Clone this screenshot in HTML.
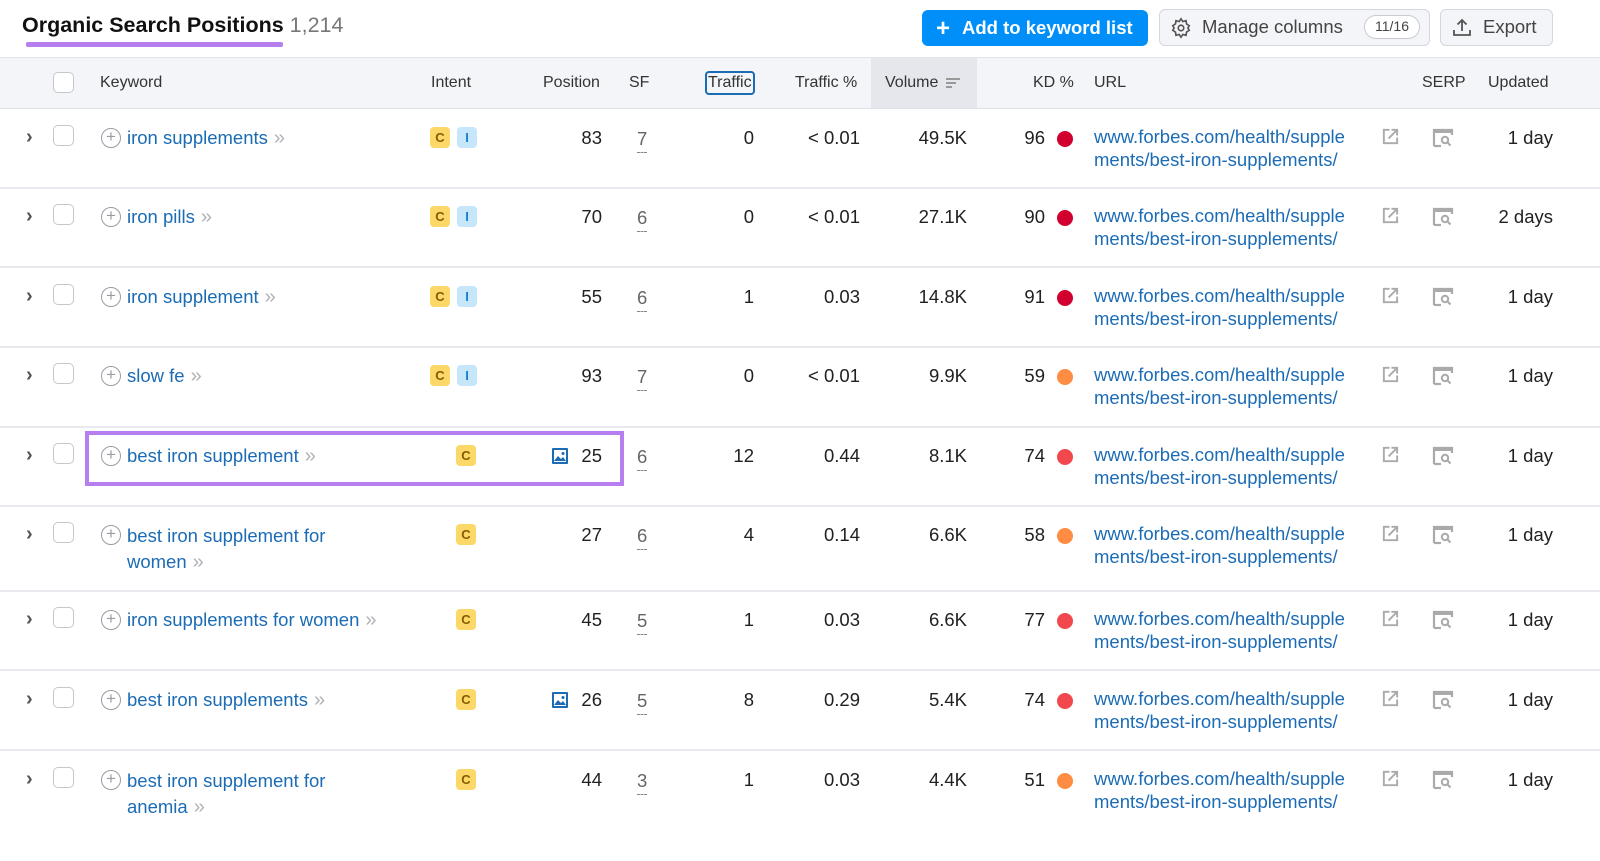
<!DOCTYPE html>
<html><head><meta charset="utf-8"><style>
*{margin:0;padding:0;box-sizing:border-box}
body{width:1600px;height:851px;overflow:hidden;background:#fff;font-family:"Liberation Sans",Arial,sans-serif;color:#212121;position:relative}
.a{position:absolute;white-space:nowrap}
.hdr{position:absolute;left:0;top:57px;width:1600px;height:52px;background:#f4f5f9;border-top:1px solid #e3e4ea;border-bottom:1px solid #dfe0e6}
.h{position:absolute;top:74px;font-size:16px;color:#333}
.row{position:absolute;left:0;width:1600px;border-bottom:2px solid #e8e9ee}
.row .a{font-size:18.5px;line-height:24px}
.chev{left:26px;top:-1px;color:#555;font-size:20px!important;font-weight:bold}
.cb{position:absolute;left:53px;top:-1px;width:21px;height:21px;border:1.5px solid #c5c7cf;border-radius:5px;background:#fff}
.plus{position:absolute;left:101px;top:2px;width:20px;height:20px;border:1.8px solid #9a9ca5;border-radius:50%;color:#9a9ca5;font-size:17px;line-height:16px;text-align:center}
.kw{left:127px;top:0;color:#1b6bb5}
.kw i{font-style:normal;color:#b0b2b8;font-size:20px;margin-left:6px}
.bC,.bI{position:absolute;top:1px;width:20px;height:21px;border-radius:4px;font-size:13px;font-weight:bold;text-align:center;line-height:21px}
.bC{background:#fcd869;color:#8a5a00}
.bI{background:#c6e6fb;color:#1a7fd1;left:457px}
.pos{right:998px;top:0}
.sf{left:637px;top:0;color:#666;border-bottom:1.5px dashed #888;line-height:26px!important}
.tr{right:846px;top:0}
.tp{right:740px;top:0}
.vol{right:633px;top:0}
.kd{right:555px;top:0}
.dot{position:absolute;left:1057px;top:5px;width:16px;height:16px;border-radius:50%}
.url{left:1094px;top:0;color:#1b6bb5;line-height:22.5px!important}
.ext{position:absolute;left:1381px;top:1px}
.serp{position:absolute;left:1432px;top:2px}
.upd{right:47px;top:0}
</style></head><body>
<div class="a" style="left:22px;top:13px;font-size:21.5px;font-weight:bold;color:#111">Organic Search Positions <span style="font-weight:normal;color:#777">1,214</span></div>
<div class="a" style="left:26px;top:42px;width:257px;height:5px;background:#b77ef0;border-radius:2px"></div>
<div class="a" style="left:922px;top:10px;width:226px;height:36px;background:#008ff8;border-radius:6px;color:#fff;font-size:18.5px;font-weight:bold;line-height:36px;padding-left:14px"><span style="font-size:24px;vertical-align:-2px;margin-right:12px">+</span>Add to keyword list</div>
<div class="a" style="left:1159px;top:9px;width:271px;height:37px;background:#f4f5f9;border:1.5px solid #d5d7de;border-radius:6px;font-size:18.5px;color:#444;line-height:34px;padding-left:42px">Manage columns
<span style="position:absolute;left:204px;top:5px;width:56px;height:24px;border:1.5px solid #c8cad1;border-radius:12px;background:#fff;font-size:14px;line-height:21px;text-align:center">11/16</span>
<svg style="position:absolute;left:10px;top:7px" width="22" height="22" viewBox="0 0 24 24" fill="none" stroke="#555" stroke-width="1.8"><circle cx="12" cy="12" r="3"/><path d="M12 2l2 3 3.5-1 .5 3.5 3 2-1.5 2.5 1.5 2.5-3 2-.5 3.5-3.5-1-2 3-2-3-3.5 1-.5-3.5-3-2L4.5 12 3 9.5l3-2L6.5 4 10 5z"/></svg></div>
<div class="a" style="left:1440px;top:9px;width:113px;height:37px;background:#f4f5f9;border:1.5px solid #d5d7de;border-radius:6px;font-size:18.5px;color:#444;line-height:34px;padding-left:42px">Export
<svg style="position:absolute;left:11px;top:7px" width="20" height="20" viewBox="0 0 20 20" fill="none" stroke="#555" stroke-width="1.8"><path d="M10 14V3M5.5 7.5L10 3l4.5 4.5M2 13v5h16v-5"/></svg></div>

<div class="hdr"><div style="position:absolute;left:871px;top:0;width:106px;height:50px;background:#e6e7ed"></div></div>
<div class="a" style="left:53px;top:72px;width:21px;height:21px;border:1.5px solid #c5c7cf;border-radius:5px;background:#fff"></div>
<div class="h a" style="left:100px">Keyword</div>
<div class="h a" style="left:431px">Intent</div>
<div class="h a" style="left:543px">Position</div>
<div class="h a" style="left:629px">SF</div>
<div class="h a" style="left:705px;top:71px;border:2px solid #1b6bb5;border-radius:4px;padding:1px 1px;line-height:18px">Traffic</div>
<div class="h a" style="left:795px">Traffic %</div>
<div class="h a" style="left:885px">Volume <span style="display:inline-block;vertical-align:middle;margin-left:3px;width:14px"><b style="display:block;height:2px;width:14px;background:#999;margin:2px 0"></b><b style="display:block;height:2px;width:10px;background:#999;margin:2px 0"></b><b style="display:block;height:2px;width:6px;background:#999;margin:2px 0"></b></span></div>
<div class="h a" style="left:1033px">KD %</div>
<div class="h a" style="left:1094px">URL</div>
<div class="h a" style="left:1422px">SERP</div>
<div class="h a" style="left:1488px">Updated</div>

<svg width="0" height="0" style="position:absolute"><defs>
<symbol id="ex" viewBox="0 0 20 20"><path d="M9 3H3v14h14v-6" fill="none" stroke="#aaa" stroke-width="2"/><path d="M8 12l9-9M11 3h6v6" fill="none" stroke="#aaa" stroke-width="2"/></symbol>
<symbol id="se" viewBox="0 0 22 20"><path d="M2 18V2h18v5" fill="none" stroke="#aaa" stroke-width="2.2"/><path d="M2 2h18v3H2z" fill="#aaa"/><circle cx="13" cy="12" r="3.2" fill="none" stroke="#aaa" stroke-width="2"/><path d="M15.5 14.5l3 3" stroke="#aaa" stroke-width="2"/><path d="M2 18h7" stroke="#aaa" stroke-width="2.2"/></symbol>
<symbol id="im" viewBox="0 0 18 18"><rect x="1" y="1" width="16" height="16" rx="1" fill="#1b6bb5"/><rect x="3" y="3" width="12" height="12" fill="#fff"/><path d="M3 14l4-5 3 3 2-2 3 4z" fill="#1b6bb5"/><circle cx="12" cy="6.5" r="1.5" fill="#1b6bb5"/></symbol>
</defs></svg>

<div class="row" style="top:108px;height:81px"><div style="position:absolute;top:18px;left:0;width:1600px">
<span class="a chev">›</span><div class="cb"></div><div class="plus">+</div><span class="a kw">iron supplements<i>»</i></span>
<div class="bC" style="left:430px">C</div><div class="bI">I</div>
<span class="a pos">83</span><span class="a sf">7</span><span class="a tr">0</span><span class="a tp">&lt; 0.01</span><span class="a vol">49.5K</span><span class="a kd">96</span><div class="dot" style="background:#d1002f"></div>
<span class="a url">www.forbes.com/health/supple<br>ments/best-iron-supplements/</span><svg class="ext" width="19" height="19"><use href="#ex"/></svg><svg class="serp" width="22" height="20"><use href="#se"/></svg><span class="a upd">1 day</span></div></div>

<div class="row" style="top:189px;height:79px"><div style="position:absolute;top:16px;left:0;width:1600px">
<span class="a chev">›</span><div class="cb"></div><div class="plus">+</div><span class="a kw">iron pills<i>»</i></span>
<div class="bC" style="left:430px">C</div><div class="bI">I</div>
<span class="a pos">70</span><span class="a sf">6</span><span class="a tr">0</span><span class="a tp">&lt; 0.01</span><span class="a vol">27.1K</span><span class="a kd">90</span><div class="dot" style="background:#d1002f"></div>
<span class="a url">www.forbes.com/health/supple<br>ments/best-iron-supplements/</span><svg class="ext" width="19" height="19"><use href="#ex"/></svg><svg class="serp" width="22" height="20"><use href="#se"/></svg><span class="a upd">2 days</span></div></div>

<div class="row" style="top:268px;height:80px"><div style="position:absolute;top:17px;left:0;width:1600px">
<span class="a chev">›</span><div class="cb"></div><div class="plus">+</div><span class="a kw">iron supplement<i>»</i></span>
<div class="bC" style="left:430px">C</div><div class="bI">I</div>
<span class="a pos">55</span><span class="a sf">6</span><span class="a tr">1</span><span class="a tp">0.03</span><span class="a vol">14.8K</span><span class="a kd">91</span><div class="dot" style="background:#d1002f"></div>
<span class="a url">www.forbes.com/health/supple<br>ments/best-iron-supplements/</span><svg class="ext" width="19" height="19"><use href="#ex"/></svg><svg class="serp" width="22" height="20"><use href="#se"/></svg><span class="a upd">1 day</span></div></div>

<div class="row" style="top:348px;height:80px"><div style="position:absolute;top:16px;left:0;width:1600px">
<span class="a chev">›</span><div class="cb"></div><div class="plus">+</div><span class="a kw">slow fe<i>»</i></span>
<div class="bC" style="left:430px">C</div><div class="bI">I</div>
<span class="a pos">93</span><span class="a sf">7</span><span class="a tr">0</span><span class="a tp">&lt; 0.01</span><span class="a vol">9.9K</span><span class="a kd">59</span><div class="dot" style="background:#ff8c43"></div>
<span class="a url">www.forbes.com/health/supple<br>ments/best-iron-supplements/</span><svg class="ext" width="19" height="19"><use href="#ex"/></svg><svg class="serp" width="22" height="20"><use href="#se"/></svg><span class="a upd">1 day</span></div></div>

<div class="row" style="top:428px;height:79px"><div style="position:absolute;top:16px;left:0;width:1600px">
<span class="a chev">›</span><div class="cb"></div><div class="plus">+</div><span class="a kw">best iron supplement<i>»</i></span>
<div class="bC" style="left:456px">C</div>
<svg style="position:absolute;left:551px;top:3px" width="18" height="18"><use href="#im"/></svg>
<span class="a pos">25</span><span class="a sf">6</span><span class="a tr">12</span><span class="a tp">0.44</span><span class="a vol">8.1K</span><span class="a kd">74</span><div class="dot" style="background:#f0484d"></div>
<span class="a url">www.forbes.com/health/supple<br>ments/best-iron-supplements/</span><svg class="ext" width="19" height="19"><use href="#ex"/></svg><svg class="serp" width="22" height="20"><use href="#se"/></svg><span class="a upd">1 day</span></div>
<div style="position:absolute;left:85px;top:3px;width:539px;height:55px;border:4px solid #b77ef0"></div></div>

<div class="row" style="top:507px;height:85px"><div style="position:absolute;top:16px;left:0;width:1600px">
<span class="a chev">›</span><div class="cb"></div><div class="plus">+</div><span class="a kw" style="line-height:26px">best iron supplement for<br>women<i>»</i></span>
<div class="bC" style="left:456px">C</div>
<span class="a pos">27</span><span class="a sf">6</span><span class="a tr">4</span><span class="a tp">0.14</span><span class="a vol">6.6K</span><span class="a kd">58</span><div class="dot" style="background:#ff8c43"></div>
<span class="a url">www.forbes.com/health/supple<br>ments/best-iron-supplements/</span><svg class="ext" width="19" height="19"><use href="#ex"/></svg><svg class="serp" width="22" height="20"><use href="#se"/></svg><span class="a upd">1 day</span></div></div>

<div class="row" style="top:592px;height:79px"><div style="position:absolute;top:16px;left:0;width:1600px">
<span class="a chev">›</span><div class="cb"></div><div class="plus">+</div><span class="a kw">iron supplements for women<i>»</i></span>
<div class="bC" style="left:456px">C</div>
<span class="a pos">45</span><span class="a sf">5</span><span class="a tr">1</span><span class="a tp">0.03</span><span class="a vol">6.6K</span><span class="a kd">77</span><div class="dot" style="background:#f0484d"></div>
<span class="a url">www.forbes.com/health/supple<br>ments/best-iron-supplements/</span><svg class="ext" width="19" height="19"><use href="#ex"/></svg><svg class="serp" width="22" height="20"><use href="#se"/></svg><span class="a upd">1 day</span></div></div>

<div class="row" style="top:671px;height:80px"><div style="position:absolute;top:17px;left:0;width:1600px">
<span class="a chev">›</span><div class="cb"></div><div class="plus">+</div><span class="a kw">best iron supplements<i>»</i></span>
<div class="bC" style="left:456px">C</div>
<svg style="position:absolute;left:551px;top:3px" width="18" height="18"><use href="#im"/></svg>
<span class="a pos">26</span><span class="a sf">5</span><span class="a tr">8</span><span class="a tp">0.29</span><span class="a vol">5.4K</span><span class="a kd">74</span><div class="dot" style="background:#f0484d"></div>
<span class="a url">www.forbes.com/health/supple<br>ments/best-iron-supplements/</span><svg class="ext" width="19" height="19"><use href="#ex"/></svg><svg class="serp" width="22" height="20"><use href="#se"/></svg><span class="a upd">1 day</span></div></div>

<div class="row" style="top:751px;height:110px;border:none"><div style="position:absolute;top:17px;left:0;width:1600px">
<span class="a chev">›</span><div class="cb"></div><div class="plus">+</div><span class="a kw" style="line-height:26px">best iron supplement for<br>anemia<i>»</i></span>
<div class="bC" style="left:456px">C</div>
<span class="a pos">44</span><span class="a sf">3</span><span class="a tr">1</span><span class="a tp">0.03</span><span class="a vol">4.4K</span><span class="a kd">51</span><div class="dot" style="background:#ff8c43"></div>
<span class="a url">www.forbes.com/health/supple<br>ments/best-iron-supplements/</span><svg class="ext" width="19" height="19"><use href="#ex"/></svg><svg class="serp" width="22" height="20"><use href="#se"/></svg><span class="a upd">1 day</span></div></div>
</body></html>
